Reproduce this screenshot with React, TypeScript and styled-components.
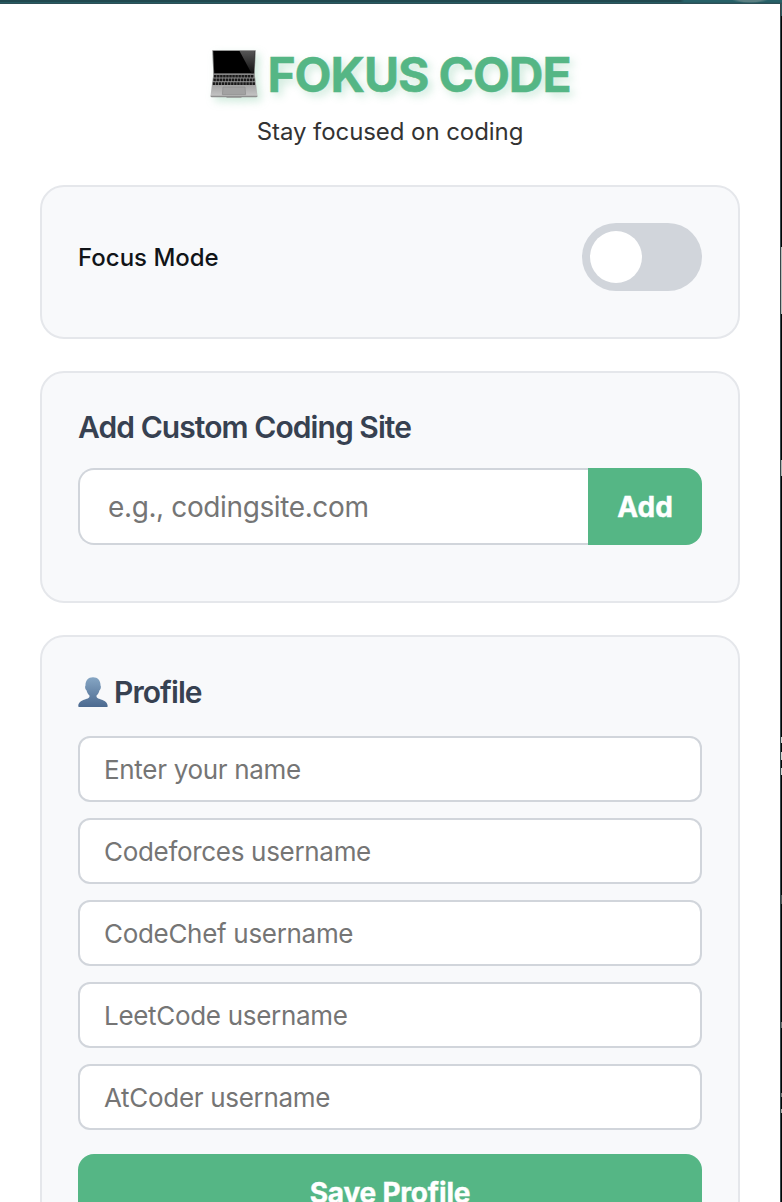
import React, { useState } from "react";
import styled, { createGlobalStyle } from "styled-components";

const GlobalStyle = createGlobalStyle`
  * { box-sizing: border-box; }
  html, body { margin: 0; padding: 0; }
  body {
    height: 1202px;
    overflow: hidden;
    background: #fff;
    font-family: Inter, "Liberation Sans", sans-serif;
  }
`;

const Desktop = styled.div`
  display: grid;
  grid-template: 4px 1198px / 780px 2px;
  width: 782px;
  height: 1202px;
  overflow: hidden;
`;

const TopEdge = styled.div`
  grid-column: 1 / -1;
  background:
    radial-gradient(ellipse 18px 3px at 750px 0, #5c8083 60%, transparent 100%),
    linear-gradient(100deg, transparent 670px, #266067 674px) 0 0 / 100% 2px no-repeat,
    linear-gradient(#21484f 0 2px, #265a61 2px 3px, #2d4f56 3px 4px);
`;

const RightEdge = styled.div`
  border-left: 1px solid #36474b;
  background: linear-gradient(
    #2d575e 0 12px,
    #020707 12px 243px,
    #b9bdb9 243px 310px,
    #020707 310px 456px,
    #b0b5b2 456px 472px,
    #020707 472px 733px,
    #cfd4d1 733px 739px,
    #020707 739px 748px,
    #cfd4d1 748px 756px,
    #020707 756px 764px,
    #cfd4d1 764px 771px,
    #020707 771px 891px,
    #4e5555 891px 900px,
    #020707 900px 1018px,
    #6d7070 1018px 1024px,
    #020707 1024px 1089px,
    #777575 1089px 1093px,
    #020707 1093px 1105px,
    #aaaeaa 1105px 1109px,
    #020707 1109px
  );
`;

const Popup = styled.main`
  display: flex;
  flex-direction: column;
  gap: 32px;
  height: 1198px;
  padding: 40px 40px 0;
  overflow: hidden;
  background: #fff;
`;

const Header = styled.header`
  display: flex;
  flex: none;
  flex-direction: column;
  align-items: center;
  height: 109px;
`;

const Title = styled.h1`
  display: flex;
  align-items: center;
  gap: 10px;
  margin: 0;
  height: 62px;
  color: #55b685;
  font-size: 48px;
  font-weight: 700;
  line-height: 62px;
  letter-spacing: -1.1px;
  white-space: nowrap;
  text-shadow: 4px 4px 8px rgba(85, 182, 133, 0.3);
  -webkit-text-stroke: 0.5px #55b685;
`;

const LaptopIcon = styled.svg`
  width: 48px;
  height: 50px;
  overflow: visible;
  filter: drop-shadow(4px 4px 4px rgba(85, 182, 133, 0.28));
`;

const Subtitle = styled.p`
  margin: 10px 0 0;
  color: #333;
  font-size: 24px;
  line-height: 32px;
  letter-spacing: -0.07px;
  white-space: nowrap;
`;

const Card = styled.section<{ $height: number }>`
  flex: none;
  height: ${(p) => p.$height}px;
  padding: 36px;
  border: 2px solid #e5e7eb;
  border-radius: 24px;
  background: #f8f9fb;
`;

const FocusCard = styled(Card)`
  margin-top: 0;
`;

const ToggleRow = styled.div`
  display: flex;
  align-items: center;
  justify-content: space-between;
  height: 68px;
`;

const ToggleLabel = styled.span`
  color: #111418;
  font-size: 24px;
  font-weight: 500;
`;

const Toggle = styled.button<{ $on: boolean }>`
  display: flex;
  justify-content: ${(p) => (p.$on ? "flex-end" : "flex-start")};
  width: 120px;
  height: 68px;
  padding: 8px;
  border: 0;
  border-radius: 34px;
  background: ${(p) => (p.$on ? "#55b685" : "#d1d5db")};
`;

const Knob = styled.span`
  width: 52px;
  height: 52px;
  border-radius: 50%;
  background: #fff;
`;

const CardTitle = styled.h2<{ $top?: number; $gap: number }>`
  display: flex;
  align-items: center;
  gap: 6px;
  margin: ${(p) => p.$top ?? 0}px 0 ${(p) => p.$gap}px;
  height: 36px;
  color: #374151;
  font-size: 30px;
  font-weight: 600;
  line-height: 36px;
  letter-spacing: -0.93px;
  white-space: nowrap;
`;

const PersonIcon = styled.svg`
  width: 30px;
  height: 32px;
`;

const SiteForm = styled.div`
  display: flex;
  height: 77px;
`;

const Field = styled.input`
  display: block;
  width: 100%;
  height: 66px;
  padding: 0 24px;
  border: 2px solid #d1d5db;
  border-radius: 12px;
  outline: none;
  background: #fff;
  color: #333;
  font-family: inherit;
  font-size: 26px;
  letter-spacing: -0.31px;
  &::placeholder { color: #757575; opacity: 1; }
`;

const SiteField = styled(Field)`
  flex: 1;
  min-width: 0;
  height: 77px;
  padding: 0 28px;
  border-right: 0;
  border-radius: 16px 0 0 16px;
  font-size: 28px;
  letter-spacing: -0.38px;
`;

const Button = styled.button`
  padding: 0;
  border: 0;
  background: #55b685;
  color: #fff;
  font: 700 28px Inter, sans-serif;
  -webkit-text-stroke: 0.4px #fff;
`;

const AddButton = styled(Button)`
  width: 114px;
  border-radius: 0 16px 16px 0;
`;

const FieldList = styled.div`
  display: flex;
  flex-direction: column;
  gap: 16px;
`;

const SaveButton = styled(Button)`
  width: 100%;
  height: 78px;
  margin-top: 24px;
  border-radius: 16px;
  letter-spacing: -0.2px;
`;

const keyRows = [26.2, 29.9, 33.6];

function Laptop() {
  return (
    <LaptopIcon viewBox="0 0 48 50" aria-hidden="true">
      <defs>
        <linearGradient id="deck" x1="0" y1="0" x2="0" y2="1">
          <stop offset="0" stopColor="#858585" />
          <stop offset="1" stopColor="#c4c4c4" />
        </linearGradient>
        <linearGradient id="glare" x1="0" y1="0" x2="0" y2="1">
          <stop offset="0" stopColor="#555" />
          <stop offset="1" stopColor="#111" />
        </linearGradient>
      </defs>
      <path d="M2.300 .3h43.400L44.700 24h-41.400z" fill="#777" />
      <path d="M3.200 1h41.600l-1 22.300H4.200z" fill="#000" />
      <path d="M29.500 1h15.300l-1 22.300h-2.300z" fill="url(#glare)" />
      <path d="M3.300 24h41.400L47.500 46H.5z" fill="url(#deck)" />
      <path d="M.5 45.800h47v.8l-1 .6H32l-1 .6H17l-1-.6H1.500l-1-.6z" fill="#8f8f8f" />
      {keyRows.map((y, i) => (
        <path
          key={y}
          d={`M${4 - i * 0.6} ${y}H${44 + i * 0.6}`}
          stroke="#191919"
          strokeWidth="2.6"
          strokeDasharray="2.5 .55"
        />
      ))}
      <path d="M13 37h22l.6 7.600H12.400z" fill="#a2a2a2" stroke="#8c8c8c" strokeWidth=".7" />
    </LaptopIcon>
  );
}

function Person() {
  return (
    <PersonIcon viewBox="0 0 30 32" aria-hidden="true">
      <defs>
        <linearGradient id="bust" x1="0" y1="0" x2="0" y2="1">
          <stop offset="0" stopColor="#86a6c4" />
          <stop offset="1" stopColor="#4c6a90" />
        </linearGradient>
      </defs>
      <path
        d="M15 1.200C10.200 1.200 7.300 4.500 7.500 9.500C6.700 10.200 7.200 13.700 8.500 14.200C9 16.500 10 18.200 11.500 19.500V20.500C11.500 24 .5 22.500 .3 30.200Q.3 31 1 31H29Q29.700 31 29.700 30.200C29.500 22.500 18.500 24 18.500 20.500V19.500C20 18.200 21 16.500 21.500 14.200C22.800 13.700 23.300 10.200 22.500 9.500C22.700 4.500 19.800 1.200 15 1.200Z"
        fill="url(#bust)"
      />
    </PersonIcon>
  );
}

const profileFields = [
  "Enter your name",
  "Codeforces username",
  "CodeChef username",
  "LeetCode username",
  "AtCoder username",
];

export default function App() {
  const [focus, setFocus] = useState(false);
  return (
    <>
      <GlobalStyle />
      <Desktop>
        <TopEdge />
        <Popup>
          <Header>
            <Title>
              <Laptop />
              FOKUS CODE
            </Title>
            <Subtitle>Stay focused on coding</Subtitle>
          </Header>
          <FocusCard $height={154}>
            <ToggleRow>
              <ToggleLabel>Focus Mode</ToggleLabel>
              <Toggle
                $on={focus}
                role="switch"
                aria-checked={focus}
                aria-label="Focus Mode"
                onClick={() => setFocus(!focus)}
              >
                <Knob />
              </Toggle>
            </ToggleRow>
          </FocusCard>
          <Card $height={232}>
            <CardTitle $gap={23}>Add Custom Coding Site</CardTitle>
            <SiteForm>
              <SiteField placeholder="e.g., codingsite.com" />
              <AddButton>Add</AddButton>
            </SiteForm>
          </Card>
          <Card $height={640}>
            <CardTitle $top={1} $gap={26}>
              <Person />
              Profile
            </CardTitle>
            <FieldList>
              {profileFields.map((label) => (
                <Field key={label} placeholder={label} />
              ))}
            </FieldList>
            <SaveButton>Save Profile</SaveButton>
          </Card>
        </Popup>
        <RightEdge />
      </Desktop>
    </>
  );
}
